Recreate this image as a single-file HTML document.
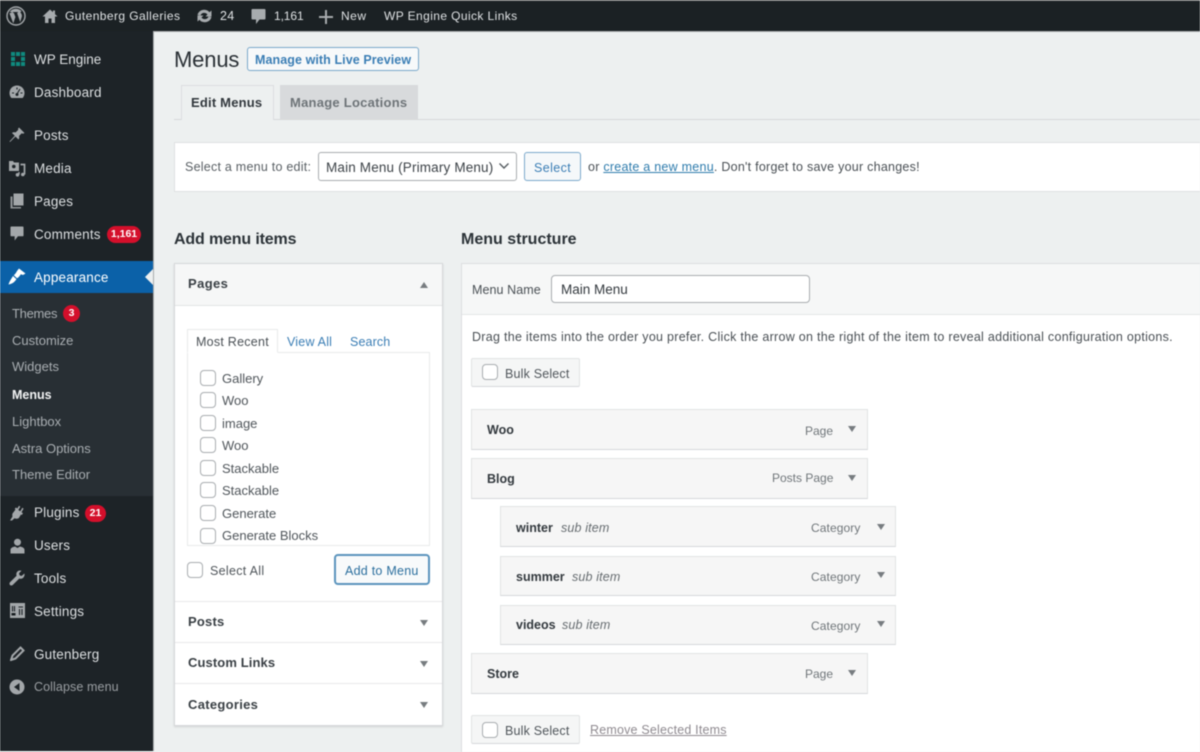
<!DOCTYPE html>
<html><head><meta charset="utf-8"><title>Menus</title>
<style>
html,body{margin:0;padding:0;background:#edf0f0}
#p{position:relative;width:1200px;height:752px;overflow:hidden;background:#edf0f0;font-family:"Liberation Sans",sans-serif;font-size:13px;color:#3c434a;filter:blur(.5px)}
#p div,#p span.t,#p svg{position:absolute}
.t{position:absolute;white-space:nowrap;line-height:20px;height:20px;margin-top:1px}
.s{color:#dfe2e4;margin-top:0}
.e{margin-top:0}
.m{color:#dcdfe1;font-size:13.5px;letter-spacing:.18px}
.sub{color:#a9aeb2;font-size:13px}
.b{font-weight:bold}
.h{font-weight:bold;font-size:13px;color:#3a4045;letter-spacing:.2px}
.box{box-sizing:border-box;border:1px solid #e1e3e4;border-bottom-color:#d6d8da;background:#f6f6f6}
.cb{box-sizing:border-box;width:16px;height:16px;border:1.5px solid #a9adb0;border-radius:4px;background:#fff}
.lab{font-size:13px;color:#50565b}
.type{font-size:12px;color:#70767a}
.tt{font-weight:bold;font-size:12.5px;color:#33393e}
.si{font-style:italic;font-size:12.5px;color:#666c70;letter-spacing:.15px}
.ar{width:0;height:0;border-left:4px solid transparent;border-right:4px solid transparent;border-top:6px solid #777c80}
.au{width:0;height:0;border-left:4px solid transparent;border-right:4px solid transparent;border-bottom:6px solid #777c80}
.badge{background:#d40f2b;color:#fff;font-size:10.5px;font-weight:bold;text-align:center;line-height:17px;height:17px;border-radius:9px}
.ln{background:#e8e9ea;height:1px}
</style></head><body>
<div id="p">
<!-- admin bar -->
<div style="left:0;top:0;width:1200px;height:32px;background:#1b2124;border-top:1px solid #777;border-bottom:1px solid #a8abac;box-sizing:border-box"></div>
<!-- sidebar -->
<div style="left:0;top:31px;width:154px;height:720px;box-sizing:border-box;background:#1d2327;border-right:1px solid #a9acae"></div>
<div style="left:0;top:261px;width:153px;height:32px;background:#0b61a8"></div>
<div style="left:0;top:293px;width:153px;height:203px;background:#282f34"></div>
<div style="left:145px;top:269px;width:0;height:0;border-top:8px solid transparent;border-bottom:8px solid transparent;border-right:8px solid #edf0f0"></div>

<!-- top icons -->
<svg style="left:6px;top:6px" width="20" height="20" viewBox="0 0 20 20"><circle cx="10" cy="10" r="9" fill="none" stroke="#a3a7aa" stroke-width="1.4"/><path d="M3.4 7.2 7.3 17.4 9.4 11 7.800 6.800H6.800V6H12V6.800H11L14.2 16 15.800 10.800C16.300 9 15.200 7.500 14.400 6.300 15 4.900 15.800 5.400 16 5.600 13 1.800 6.500 1.600 3.600 6H5.400V6.900H4.400Z" fill="#a3a7aa"/></svg>
<svg style="left:42px;top:8px" width="16" height="16" viewBox="0 0 16 15"><path d="M8 1 .5 8H3V14.500H6.500V10H9.500V14.500H13V8H15.500L13 5.600V2H11V3.800Z" fill="#a7abae"/></svg>
<span class="t s" style="left:65px;top:6px;font-size:12px;letter-spacing:.42px">Gutenberg Galleries</span>
<svg style="left:196px;top:8px" width="17" height="16" viewBox="0 0 17 15"><path d="M1.500 6.500C2.500 2.500 6.500.5 10.300 1.600 11.800 2 12.700 2.800 13.500 3.800L15.500 2V8H9.500L11.500 6C10.500 4.600 8.600 4 7 4.500 5.700 5 4.900 5.800 4.500 7ZM15.500 8.500C14.500 12.500 10.500 14.500 6.700 13.400 5.200 13 4.300 12.200 3.500 11.200L1.500 13V7H7.500L5.500 9C6.500 10.400 8.400 11 10 10.500 11.300 10 12.100 9.200 12.500 8Z" fill="#a7abae"/></svg>
<span class="t s" style="left:220px;top:6px;font-size:12.500px;letter-spacing:.3px">24</span>
<svg style="left:251px;top:8px" width="15" height="17" viewBox="0 0 15 16"><path d="M1.500 .5H13.500C14.100 .5 14.500 .9 14.500 1.500V10C14.500 10.600 14.100 11 13.500 11H8.500L5 15.500V11H1.500C.9 11 .5 10.600 .5 10V1.500C.5 .9 .9 .5 1.500 .5Z" fill="#a7abae"/></svg>
<span class="t s" style="left:274px;top:6px;font-size:12px;letter-spacing:-.1px">1,161</span>
<svg style="left:319px;top:10px" width="14" height="14" viewBox="0 0 14 14"><path d="M6 0H8V6H14V8H8V14H6V8H0V6H6Z" fill="#a7abae"/></svg>
<span class="t s" style="left:341px;top:6px;font-size:12px;letter-spacing:.5px">New</span>
<span class="t s" style="left:384px;top:6px;font-size:12px;letter-spacing:.4px">WP Engine Quick Links</span>

<!-- side icons -->
<svg style="left:11px;top:52px" width="14" height="14" viewBox="0 0 14 14" fill="#0f8a7e"><rect x="0" y="0" width="4" height="4"/><rect x="5" y="0" width="4" height="4"/><rect x="10" y="0" width="4" height="4"/><rect x="0" y="5" width="4" height="4"/><rect x="10" y="5" width="4" height="4"/><rect x="0" y="10" width="4" height="4"/><rect x="5" y="10" width="4" height="4"/><rect x="10" y="10" width="4" height="4"/></svg>
<svg style="left:9px;top:85px" width="16" height="14" viewBox="0 0 16 14"><path d="M8 .5C3.800 .5.500 3.800.500 8 .500 10 1.200 11.700 2.400 13H13.600C14.800 11.700 15.500 10 15.500 8 15.500 3.800 12.200.5 8 .5Z" fill="#a3a7aa"/><path d="M8 9 11 4M3 8H5M11.500 8H13.500M8 2.500V4.500" stroke="#1d2327" stroke-width="1.100" fill="none"/><circle cx="8" cy="9.500" r="1.500" fill="#1d2327"/></svg>
<svg style="left:9px;top:127px" width="16" height="16" viewBox="0 0 16 16"><path d="M10 .5 15.500 6 14 6.800 12.700 6.300 10 9C10.400 10.500 10.200 11.600 9.500 12.500L6.500 9.500 1 15 .5 14.500 5.800 8.800 3 6C4 5.300 5 5.100 6.500 5.500L9.300 2.800 9 1.700Z" fill="#a3a7aa"/></svg>
<svg style="left:8px;top:160px" width="18" height="17" viewBox="0 0 18 17"><path d="M1 1H5L6 2.500H11V11H1Z" fill="#a3a7aa"/><circle cx="5.800" cy="6.500" r="1.800" fill="#1d2327"/><path d="M12.500 4.500H16.500V14.500" stroke="#a3a7aa" stroke-width="1.700" fill="none"/><circle cx="14.800" cy="14.500" r="1.800" fill="#a3a7aa"/><circle cx="9.500" cy="14.800" r="1.800" fill="#a3a7aa"/><path d="M11 14.500V12" stroke="#a3a7aa" stroke-width="1.300"/></svg>
<svg style="left:10px;top:193px" width="14" height="16" viewBox="0 0 14 16"><rect x="3.500" y=".5" width="10" height="12" fill="#a3a7aa"/><path d="M.5 3.500H2.500V14H11V15.500H.5Z" fill="#8f9396"/></svg>
<svg style="left:10px;top:226px" width="14" height="15" viewBox="0 0 15 16"><path d="M1.500 .5H13.500C14.100 .5 14.500 .9 14.500 1.500V10C14.500 10.600 14.100 11 13.500 11H8.500L5 15.500V11H1.500C.9 11 .5 10.600 .5 10V1.500C.5 .9 .9 .5 1.500 .5Z" fill="#a3a7aa"/></svg>
<svg style="left:8px;top:268px" width="18" height="17" viewBox="0 0 18 17"><path d="M11 .5 17.500 5.500 15 7 12.800 6.200C11.800 8 10.500 9.500 9 10.300L5.800 7.300C7.200 6 8.300 4.500 9 3Z" fill="#fff"/><path d="M5 8 8.500 11.200 6.800 13.200C5.500 14.800 3.500 15.800 .5 16.500 1.300 14 2.300 12.500 3.300 10.800Z" fill="#fff"/></svg>
<svg style="left:9px;top:505px" width="16" height="16" viewBox="0 0 16 16"><path d="M10 .8 11.300 1.600 9.300 5 11.300 6.200 13.300 2.800 14.600 3.600 12.500 7.200 14 8.300 12.800 10 12 9.500 10 12.800C9 14 7 14 5.500 13.300L3 15.500 1 15.500 3.500 11.500C3 10 3.300 8.300 4.500 7.300L6.500 4.500 5.700 3.800 7 2.500 8.300 3.500Z" fill="#a3a7aa"/></svg>
<svg style="left:10px;top:538px" width="15" height="16" viewBox="0 0 15 16"><circle cx="7.500" cy="4.200" r="3.500" fill="#a3a7aa"/><path d="M.5 15.500V12C.5 10 2.500 9 5 8.500L7.500 10 10 8.500C12.500 9 14.500 10 14.500 12V15.500Z" fill="#a3a7aa"/></svg>
<svg style="left:9px;top:570px" width="16" height="16" viewBox="0 0 16 16"><path d="M15.500 3.500 12.500 6 10.500 5.300 10 3.300 12.500 .7C10.500 0 8.500 .8 7.700 2.500 7.200 3.600 7.200 4.800 7.600 5.700L1 12.300C.3 13 .3 14.300 1 15 1.700 15.700 3 15.700 3.700 15L10.300 8.500C11.500 9 13 8.800 14.200 7.700 15.300 6.700 15.800 5 15.500 3.500Z" fill="#a3a7aa"/></svg>
<svg style="left:10px;top:603px" width="15" height="15" viewBox="0 0 15 15"><rect width="15" height="15" fill="#a3a7aa"/><path d="M2.500 3V8.500M4.500 3V8.500M2 10.500H5V12H2ZM9.500 12V6M12 12V6M8.500 4H13" stroke="#1d2327" stroke-width="1.100"/></svg>
<svg style="left:10px;top:646px" width="15" height="15" viewBox="0 0 15 15"><path d="M10.500 1.500 13.500 4.500 5.500 12.500 1 14 2.500 9.500Z" fill="none" stroke="#a3a7aa" stroke-width="2"/></svg>
<svg style="left:9px;top:679px" width="16" height="16" viewBox="0 0 16 16"><circle cx="8" cy="8" r="7.500" fill="#a3a7aa"/><path d="M10.500 4V12L5 8Z" fill="#1d2327"/></svg>

<!-- side menu -->
<span class="t m" style="left:34px;top:49px;letter-spacing:0">WP Engine</span>
<span class="t m" style="left:34px;top:82px">Dashboard</span>
<span class="t m" style="left:34px;top:125px">Posts</span>
<span class="t m" style="left:34px;top:158px">Media</span>
<span class="t m" style="left:34px;top:191px">Pages</span>
<span class="t m" style="left:34px;top:224px">Comments</span>
<div class="badge" style="left:107px;top:226px;width:34px">1,161</div>
<span class="t" style="left:34px;top:267px;font-size:13.500px;color:#fff;letter-spacing:.18px">Appearance</span>
<span class="t sub" style="left:12px;top:303px;letter-spacing:-.3px">Themes</span>
<div class="badge" style="left:63px;top:305px;width:17px">3</div>
<span class="t sub" style="left:12px;top:330px">Customize</span>
<span class="t sub e" style="left:12px;top:357px">Widgets</span>
<span class="t b e" style="left:12px;top:385px;color:#f3f4f5;font-size:12.500px">Menus</span>
<span class="t sub" style="left:12px;top:411px">Lightbox</span>
<span class="t sub" style="left:12px;top:438px">Astra Options</span>
<span class="t sub e" style="left:12px;top:465px">Theme Editor</span>
<span class="t m" style="left:34px;top:502px">Plugins</span>
<div class="badge" style="left:85px;top:505px;width:21px">21</div>
<span class="t m" style="left:34px;top:535px">Users</span>
<span class="t m" style="left:34px;top:568px">Tools</span>
<span class="t m" style="left:34px;top:601px">Settings</span>
<span class="t m" style="left:34px;top:644px">Gutenberg</span>
<span class="t" style="left:34px;top:676px;font-size:12.500px;color:#9a9ea2;letter-spacing:.1px">Collapse menu</span>

<!-- heading -->
<span class="t" style="left:174px;top:49px;font-size:22px;color:#2a3035;line-height:20px;letter-spacing:-.15px">Menus</span>
<div style="left:247px;top:47px;width:172px;height:24px;box-sizing:border-box;border:1px solid #7ba9cb;border-radius:3px;background:#f7f9fa"></div>
<span class="t" style="left:255px;top:49px;font-size:12.500px;font-weight:bold;color:#3b7eb5;letter-spacing:.08px">Manage with Live Preview</span>

<!-- tabs -->
<div style="left:174px;top:119px;width:1026px;height:1px;background:#d6d8da"></div>
<div style="left:181px;top:85px;width:93px;height:35px;box-sizing:border-box;border:1px solid #dcdee0;border-bottom:none;background:#edf0f0"></div>
<div style="left:280px;top:85px;width:138px;height:34px;background:#d8dadc"></div>
<span class="t b" style="left:191px;top:92px;font-size:13px;color:#32383d;letter-spacing:.2px">Edit Menus</span>
<span class="t b" style="left:290px;top:92px;font-size:13px;color:#6e7478;letter-spacing:.25px">Manage Locations</span>

<!-- select bar -->
<div style="left:174px;top:142px;width:1030px;height:50px;box-sizing:border-box;background:#fff;border:1px solid #dfe1e2"></div>
<span class="t" style="left:185px;top:156px;font-size:12.500px;color:#5a6065;letter-spacing:.24px">Select a menu to edit:</span>
<div style="left:318px;top:152px;width:199px;height:29px;box-sizing:border-box;border:1px solid #a9adb0;border-radius:3px;background:#fff"></div>
<span class="t" style="left:326px;top:157px;font-size:13.500px;color:#3d4348;letter-spacing:.16px">Main Menu (Primary Menu)</span>
<svg style="left:498px;top:162px" width="12" height="8" viewBox="0 0 12 8"><path d="M1.500 1.500 6 6 10.500 1.500" fill="none" stroke="#555b60" stroke-width="1.400"/></svg>
<div style="left:524px;top:152px;width:57px;height:29px;box-sizing:border-box;border:1px solid #7ba9cb;border-radius:3px;background:#f5f8fa"></div>
<span class="t" style="left:534px;top:157px;font-size:12.500px;color:#3b7eb5;letter-spacing:.4px">Select</span>
<span class="t" style="left:588px;top:156px;font-size:12.500px;color:#4a5055;letter-spacing:.25px">or <span style="color:#2f7cad;text-decoration:underline">create a new menu</span>. Don't forget to save your changes!</span>

<!-- section titles -->
<span class="t" style="left:174px;top:229px;font-size:16px;font-weight:bold;color:#2c3338;letter-spacing:-.15px">Add menu items</span>
<span class="t" style="left:461px;top:229px;font-size:16px;font-weight:bold;color:#2c3338">Menu structure</span>

<!-- left accordion -->
<div style="left:174px;top:263px;width:269px;height:463px;box-sizing:border-box;background:#fff;border:1px solid #d6d8da;box-shadow:0 1px 2px rgba(0,0,0,.12)"></div>
<div style="left:175px;top:264px;width:267px;height:41px;background:#f6f7f7;border-bottom:1px solid #e2e4e5"></div>
<span class="t h e" style="left:188px;top:274px;letter-spacing:.4px">Pages</span>
<div class="au" style="left:420px;top:282px"></div>
<div style="left:187px;top:352px;width:243px;height:194px;box-sizing:border-box;border:1px solid #e8eaeb;background:#fff"></div>
<div style="left:187px;top:329px;width:91px;height:24px;box-sizing:border-box;border:1px solid #e8eaeb;border-bottom:1px solid #fff;background:#fff"></div>
<span class="t" style="left:196px;top:331px;font-size:12.500px;color:#4a5055;letter-spacing:.25px">Most Recent</span>
<span class="t" style="left:287px;top:331px;font-size:12.500px;color:#3b7eb5;letter-spacing:.2px">View All</span>
<span class="t" style="left:350px;top:331px;font-size:12.500px;color:#3b7eb5;letter-spacing:.12px">Search</span>

<div class="cb" style="left:200px;top:370px"></div><span class="t lab" style="left:222px;top:368px">Gallery</span>
<div class="cb" style="left:200px;top:392px"></div><span class="t lab e" style="left:222px;top:391px">Woo</span>
<div class="cb" style="left:200px;top:415px"></div><span class="t lab e" style="left:222px;top:414px">image</span>
<div class="cb" style="left:200px;top:437px"></div><span class="t lab e" style="left:222px;top:436px">Woo</span>
<div class="cb" style="left:200px;top:460px"></div><span class="t lab e" style="left:222px;top:459px">Stackable</span>
<div class="cb" style="left:200px;top:482px"></div><span class="t lab e" style="left:222px;top:481px">Stackable</span>
<div class="cb" style="left:200px;top:505px"></div><span class="t lab e" style="left:222px;top:504px">Generate</span>
<div class="cb" style="left:200px;top:528px"></div><span class="t lab e" style="left:222px;top:526px">Generate Blocks</span>

<div class="cb" style="left:187px;top:562px"></div><span class="t lab e" style="left:210px;top:561px;font-size:12.500px;letter-spacing:.3px">Select All</span>
<div style="left:334px;top:554px;width:96px;height:31px;box-sizing:border-box;border:2px solid #5b94bd;border-radius:4px;background:#f8fafb"></div>
<span class="t" style="left:345px;top:560px;font-size:12.500px;color:#2c6f9e;letter-spacing:.25px">Add to Menu</span>

<div class="ln" style="left:175px;top:601px;width:267px"></div>
<div class="ln" style="left:175px;top:642px;width:267px"></div>
<div class="ln" style="left:175px;top:683px;width:267px"></div>
<span class="t h e" style="left:188px;top:612px">Posts</span>
<span class="t h e" style="left:188px;top:653px;letter-spacing:.1px">Custom Links</span>
<span class="t h" style="left:188px;top:694px;letter-spacing:.3px">Categories</span>
<div class="ar" style="left:420px;top:620px"></div>
<div class="ar" style="left:420px;top:661px"></div>
<div class="ar" style="left:420px;top:702px"></div>

<!-- right panel -->
<div style="left:461px;top:263px;width:745px;height:495px;box-sizing:border-box;background:#fff;border:1px solid #dcdee0"></div>
<div style="left:462px;top:264px;width:738px;height:50px;background:#f6f7f7;border-bottom:1px solid #e4e6e7"></div>
<span class="t e" style="left:472px;top:280px;font-size:12.500px;color:#4a5055;letter-spacing:.08px">Menu Name</span>
<div style="left:551px;top:275px;width:259px;height:28px;box-sizing:border-box;border:1px solid #a9adb0;border-radius:4px;background:#fff"></div>
<span class="t" style="left:561px;top:279px;font-size:13.500px;color:#33393e">Main Menu</span>
<span class="t e" style="left:472px;top:327px;font-size:12.500px;color:#4a5055;letter-spacing:.28px">Drag the items into the order you prefer. Click the arrow on the right of the item to reveal additional configuration options.</span>

<div class="box" style="left:471px;top:358px;width:109px;height:29px;border-radius:2px;background:#f5f6f6"></div>
<div class="cb" style="left:482px;top:364px"></div>
<span class="t lab" style="left:505px;top:363px;font-size:12.500px;letter-spacing:.18px">Bulk Select</span>

<div class="box" style="left:471px;top:409px;width:397px;height:41px"></div>
<span class="t tt" style="left:487px;top:419px">Woo</span>
<span class="t type" style="left:805px;top:420px">Page</span><div class="ar" style="left:848px;top:426px"></div>

<div class="box" style="left:471px;top:458px;width:397px;height:41px"></div>
<span class="t tt" style="left:487px;top:468px">Blog</span>
<span class="t type e" style="left:772px;top:468px">Posts Page</span><div class="ar" style="left:848px;top:475px"></div>

<div class="box" style="left:500px;top:506px;width:396px;height:41px"></div>
<span class="t tt" style="left:516px;top:517px">winter</span>
<span class="t si" style="left:561px;top:517px">sub item</span>
<span class="t type" style="left:811px;top:517px;letter-spacing:.1px">Category</span><div class="ar" style="left:877px;top:524px"></div>

<div class="box" style="left:500px;top:556px;width:396px;height:40px"></div>
<span class="t tt" style="left:516px;top:566px">summer</span>
<span class="t si" style="left:572px;top:566px">sub item</span>
<span class="t type" style="left:811px;top:566px;letter-spacing:.1px">Category</span><div class="ar" style="left:877px;top:572px"></div>

<div class="box" style="left:500px;top:605px;width:396px;height:40px"></div>
<span class="t tt" style="left:516px;top:614px">videos</span>
<span class="t si" style="left:562px;top:614px">sub item</span>
<span class="t type" style="left:811px;top:615px;letter-spacing:.1px">Category</span><div class="ar" style="left:877px;top:621px"></div>

<div class="box" style="left:471px;top:653px;width:397px;height:41px"></div>
<span class="t tt" style="left:487px;top:663px">Store</span>
<span class="t type" style="left:805px;top:663px">Page</span><div class="ar" style="left:848px;top:670px"></div>

<div class="box" style="left:471px;top:715px;width:109px;height:29px;border-radius:2px;background:#f5f6f6"></div>
<div class="cb" style="left:482px;top:722px"></div>
<span class="t lab" style="left:505px;top:720px;font-size:12.500px;letter-spacing:.18px">Bulk Select</span>
<span class="t e" style="left:590px;top:720px;font-size:12.500px;color:#8f8a90;text-decoration:underline;letter-spacing:.19px">Remove Selected Items</span>
</div>
</body></html>
